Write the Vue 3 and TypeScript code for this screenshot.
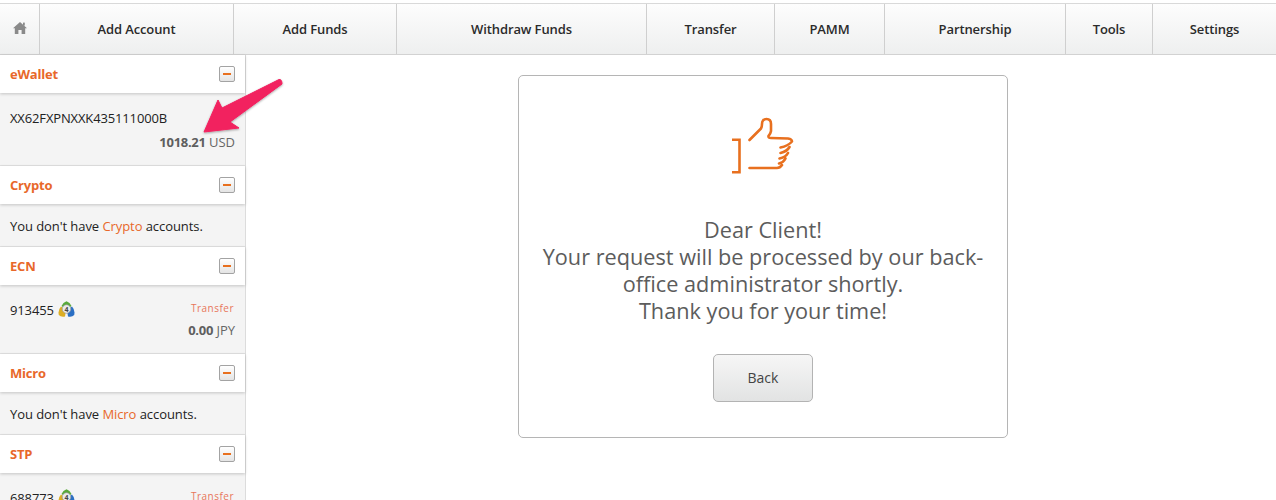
<script setup lang="ts">
interface Section {
  title: string
  empty?: boolean
  account?: string
  terminal?: boolean
  amount?: string
  currency?: string
}
const navItems: { label: string; width: number }[] = [
  { label: 'Add Account', width: 194 },
  { label: 'Add Funds', width: 163 },
  { label: 'Withdraw Funds', width: 250 },
  { label: 'Transfer', width: 128 },
  { label: 'PAMM', width: 110 },
  { label: 'Partnership', width: 181 },
  { label: 'Tools', width: 87 },
  { label: 'Settings', width: 124 },
]
const sections: Section[] = [
  { title: 'eWallet', account: 'XX62FXPNXXK435111000B', amount: '1018.21', currency: 'USD' },
  { title: 'Crypto', empty: true },
  { title: 'ECN', account: '913455', terminal: true, amount: '0.00', currency: 'JPY' },
  { title: 'Micro', empty: true },
  { title: 'STP', account: '688773', terminal: true, amount: '0.00', currency: 'USD' },
]
</script>

<template>
  <div class="page">
    <nav class="nav">
      <a class="nav-home" aria-label="Home">
        <svg width="14" height="14" viewBox="0 0 14 14">
          <path d="M7 1 L14 7.2 L12.2 7.2 L12.2 13 L8.6 13 L8.6 9 L5.4 9 L5.4 13 L1.8 13 L1.8 7.2 L0 7.2 Z" fill="#8a8a8a" />
          <rect x="10" y="1.6" width="1.8" height="3" fill="#8a8a8a" />
        </svg>
      </a>
      <a v-for="item in navItems" :key="item.label" class="nav-item" :style="{ width: item.width + 'px' }">{{ item.label }}</a>
    </nav>
    <div class="content">
      <aside class="sidebar">
        <section v-for="s in sections" :key="s.title" class="group">
          <header class="group-head">
            <span class="group-title">{{ s.title }}</span>
            <span class="toggle"><i></i></span>
          </header>
          <div v-if="s.empty" class="group-body empty">
            You don't have <em>{{ s.title }}</em> accounts.
          </div>
          <div v-else class="group-body account" :class="{ hasTerminal: s.terminal }">
            <div class="acc-row">
              <span class="acc-id">{{ s.account }}</span>
              <svg v-if="s.terminal" class="mt4" width="17" height="17" viewBox="0 0 17 17">
                <path d="M8.5 .3 Q12 1.500 13.500 5 L8.500 8.500 L3.500 5 Q5 1.500 8.500 .3 Z" fill="#58a93a" />
                <path d="M3 5.500 L8 9 L7 15.500 Q3 16.500 .8 14 Q-.3 9 3 5.500 Z" fill="#dcae24" />
                <path d="M14 5.500 L9 9 L10 15.500 Q14 16.500 16.200 14 Q17.300 9 14 5.500 Z" fill="#2a6fc4" />
                <circle cx="8.500" cy="8" r="4.300" fill="#e9e9e9" stroke="#8f8f8f" stroke-width=".6" />
                <text x="8.500" y="10.500" text-anchor="middle" class="mt4-num">4</text>
              </svg>
              <a v-if="s.terminal" class="transfer">Transfer</a>
            </div>
            <div class="balance"><b>{{ s.amount }}</b> {{ s.currency }}</div>
          </div>
        </section>
      </aside>
      <main class="main">
        <div class="card">
          <svg class="thumb" width="66" height="60" viewBox="0 0 66 60" fill="none" stroke="#e8701f" stroke-width="2.600">
            <path d="M2 23.800 H9.500 V56.200 H2" />
            <path stroke-linecap="round" stroke-linejoin="round" d="M19.500 24 L31 12.500 Q32 11 32 8 Q32 3 36.500 3 Q41 3 41 8 L41 15 Q40.500 18 38.500 20 Q38 22 41 22 L58 22.500 Q62 23 62 25.500 Q58 30 50.500 31.500 M59.500 31 Q57 35.500 50.500 37 M58 37 Q56 41 49.500 42.500 M55.500 42.500 Q53.500 46.500 49 47.500 M19.500 52 H47 Q50 52 52 49" />
          </svg>
          <p class="message">
            Dear Client!<br />Your request will be processed by our back-office administrator shortly.<br />Thank you for your time!
          </p>
          <button class="back" type="button">Back</button>
        </div>
      </main>
    </div>
    <svg class="arrow" width="90" height="64" viewBox="0 0 90 64">
      <defs>
        <filter id="arrowShadow" x="-20%" y="-20%" width="140%" height="140%">
          <feDropShadow dx="0" dy="1" stdDeviation="1" flood-color="#000" flood-opacity=".35" />
        </filter>
      </defs>
      <path d="M78 3.500 Q81 3 81 8 L29 46 L38 52 L3 56 L17 24 L21 32 Z" fill="#f2215f" stroke="#f2215f" stroke-linejoin="round" filter="url(#arrowShadow)" />
    </svg>
  </div>
</template>

<style>
html,
body {
  margin: 0;
  background: #fff;
}
</style>

<style scoped>
.page {
  position: relative;
  height: 500px;
  overflow: hidden;
  font-family: "Open Sans", "Noto Sans", sans-serif;
  color: #222;
  padding-top: 3px;
  box-sizing: border-box;
}
.nav {
  display: flex;
  height: 52px;
  box-sizing: border-box;
  border-top: 1px solid #d9d9d9;
  border-bottom: 1px solid #d2d2d2;
  background: linear-gradient(#fdfdfd, #eeefef);
}
.nav-home {
  width: 39px;
  flex: none;
  display: flex;
  align-items: center;
  justify-content: center;
  padding-bottom: 3px;
  box-sizing: border-box;
}
.nav-item {
  flex: none;
  box-sizing: border-box;
  border-left: 1px solid #cfcfcf;
  display: flex;
  align-items: center;
  justify-content: center;
  padding-bottom: 1px;
  font-size: 13px;
  font-weight: 600;
  color: #2b2b2b;
  letter-spacing: -0.1px;
}
.content {
  display: flex;
}
.sidebar {
  width: 246px;
  flex: none;
  box-sizing: border-box;
  border-right: 1px solid #dcdcdc;
}
.group-head {
  height: 38px;
  display: flex;
  align-items: center;
  justify-content: space-between;
  padding: 0 10px;
  background: #fff;
  position: relative;
  box-shadow: 0 1px 3px rgba(0, 0, 0, 0.2);
}
.group-title {
  font-size: 13px;
  font-weight: 700;
  color: #e8682a;
  letter-spacing: -0.2px;
}
.toggle {
  width: 14px;
  height: 14px;
  border: 1px solid #a3a3a3;
  border-radius: 2px;
  background: linear-gradient(#fff, #e4e4e4);
  display: flex;
  align-items: center;
  justify-content: center;
  margin-bottom: 1px;
}
.toggle i {
  width: 8px;
  height: 2px;
  background: #e8701f;
  display: block;
}
.group-body {
  background: #f4f4f4;
  border-bottom: 1px solid #e2e2e2;
  font-size: 13px;
  color: #222;
  box-sizing: border-box;
  padding: 0 10px;
}
.empty {
  height: 43px;
  padding-top: 13px;
  line-height: 18px;
  letter-spacing: -0.07px;
}
.empty em {
  font-style: normal;
  color: #e8682a;
}
.account {
  height: 73px;
  padding-top: 15px;
}
.account.hasTerminal {
  height: 69px;
}
.acc-row {
  display: flex;
  align-items: center;
  height: 20px;
  letter-spacing: -0.14px;
}
.mt4 {
  margin-left: 4px;
  margin-bottom: 1px;
}
.mt4-num {
  font-size: 7px;
  font-weight: 700;
  fill: #444;
}
.transfer {
  margin-left: auto;
  font-size: 10px;
  color: #e8765a;
  letter-spacing: 0.5px;
  margin-right: 1px;
  margin-bottom: 5px;
}
.balance {
  text-align: right;
  margin-top: 5px;
  line-height: 18px;
  color: #666;
}
.hasTerminal .balance {
  margin-top: 1px;
}
.balance b {
  font-weight: 700;
  color: #5e5e5e;
  letter-spacing: -0.3px;
}
.main {
  flex: 1;
  display: flex;
  justify-content: center;
  padding: 20px 0 0 4px;
}
.card {
  width: 490px;
  height: 363px;
  box-sizing: border-box;
  border: 1px solid #b5b5b5;
  border-radius: 5px;
  display: flex;
  flex-direction: column;
  align-items: center;
  padding: 40px 16px 0;
}
.thumb {
  display: block;
  flex: none;
}
.message {
  margin: 40px 0 0;
  font-size: 21.7px;
  line-height: 27px;
  color: #5c5c5c;
  text-align: center;
  width: 450px;
}
.back {
  margin-top: 30px;
  width: 100px;
  height: 48px;
  box-sizing: border-box;
  border: 1px solid #b3b3b3;
  border-radius: 5px;
  background: linear-gradient(#f6f6f6, #e2e3e3);
  font-family: inherit;
  font-size: 14px;
  color: #444;
  padding: 0 0 1px;
}
.arrow {
  position: absolute;
  left: 201px;
  top: 76px;
}
</style>
